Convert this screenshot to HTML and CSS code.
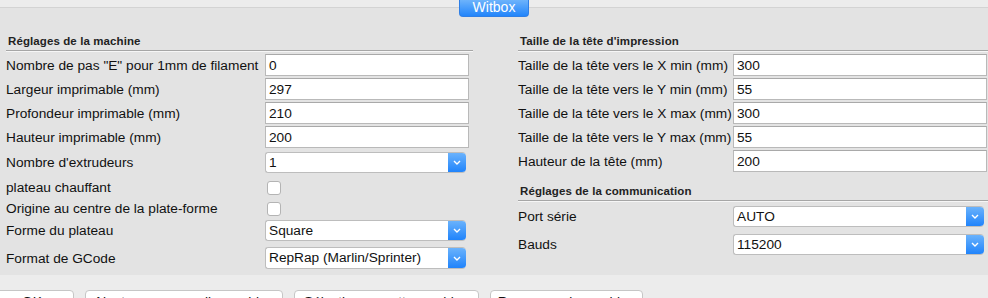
FILE: index.html
```html
<!DOCTYPE html>
<html lang="fr">
<head>
<meta charset="utf-8">
<title>Witbox</title>
<link rel="stylesheet" href="styles.css">
</head>
<body>
<div class="window">
  <div class="tabbar"><div class="tab">Witbox</div></div>
  <div class="panel">
    <div class="col left">
      <div class="section-title">Réglages de la machine</div>
      <div class="row r-first"><span class="label">Nombre de pas "E" pour 1mm de filament</span><div class="field">0</div></div>
      <div class="row"><span class="label">Largeur imprimable (mm)</span><div class="field">297</div></div>
      <div class="row"><span class="label">Profondeur imprimable (mm)</span><div class="field">210</div></div>
      <div class="row"><span class="label">Hauteur imprimable (mm)</span><div class="field">200</div></div>
      <div class="row r-sel1"><span class="label">Nombre d'extrudeurs</span><div class="select"><span class="val">1</span><span class="arrow"><svg width="8" height="5" viewBox="0 0 8 5"><path d="M1 1 L4 4 L7 1" fill="none" stroke="#fff" stroke-width="1.4"/></svg></span></div></div>
      <div class="row r-check1"><span class="label">plateau chauffant</span><span class="check"></span></div>
      <div class="row r-check2"><span class="label">Origine au centre de la plate-forme</span><span class="check"></span></div>
      <div class="row r-sel2"><span class="label">Forme du plateau</span><div class="select"><span class="val">Square</span><span class="arrow"><svg width="8" height="5" viewBox="0 0 8 5"><path d="M1 1 L4 4 L7 1" fill="none" stroke="#fff" stroke-width="1.4"/></svg></span></div></div>
      <div class="row r-sel3"><span class="label">Format de GCode</span><div class="select"><span class="val">RepRap (Marlin/Sprinter)</span><span class="arrow"><svg width="8" height="5" viewBox="0 0 8 5"><path d="M1 1 L4 4 L7 1" fill="none" stroke="#fff" stroke-width="1.4"/></svg></span></div></div>
    </div>
    <div class="col right">
      <div class="section-title">Taille de la tête d'impression</div>
      <div class="row r-first"><span class="label">Taille de la tête vers le X min (mm)</span><div class="field">300</div></div>
      <div class="row"><span class="label">Taille de la tête vers le Y min (mm)</span><div class="field">55</div></div>
      <div class="row"><span class="label">Taille de la tête vers le X max (mm)</span><div class="field">300</div></div>
      <div class="row"><span class="label">Taille de la tête vers le Y max (mm)</span><div class="field">55</div></div>
      <div class="row"><span class="label">Hauteur de la tête (mm)</span><div class="field">200</div></div>
      <div class="section-title st2">Réglages de la communication</div>
      <div class="row r-port"><span class="label">Port série</span><div class="select"><span class="val">AUTO</span><span class="arrow"><svg width="8" height="5" viewBox="0 0 8 5"><path d="M1 1 L4 4 L7 1" fill="none" stroke="#fff" stroke-width="1.4"/></svg></span></div></div>
      <div class="row r-baud"><span class="label">Bauds</span><div class="select"><span class="val">115200</span><span class="arrow"><svg width="8" height="5" viewBox="0 0 8 5"><path d="M1 1 L4 4 L7 1" fill="none" stroke="#fff" stroke-width="1.4"/></svg></span></div></div>
    </div>
  </div>
  <div class="buttons">
    <div class="btn btn-ok">OK</div>
    <div class="btn btn-add">Ajouter une nouvelle machine</div>
    <div class="btn btn-sel">Sélectionner cette machine</div>
    <div class="btn btn-ren">Renommer la machine</div>
  </div>
</div>
</body>
</html>
```

FILE: styles.css
```css
* { box-sizing: border-box; }
html, body { margin: 0; padding: 0; }
body {
  width: 988px;
  height: 298px;
  overflow: hidden;
  background: #ececec;
  font-family: "Liberation Sans", Arial, sans-serif;
  font-size: 13.7px;
  color: #111;
}
.window { position: relative; width: 988px; height: 298px; overflow: hidden; }
.tabbar {
  height: 8px;
  background: #ececec;
  border-bottom: 1px solid #d3d3d3;
}
.tab {
  position: absolute;
  top: 0;
  left: 459px;
  width: 70px;
  height: 17px;
  padding-bottom: 3px;
  line-height: 14px;
  text-align: center;
  color: #fff;
  font-size: 14px;
  background: linear-gradient(#6db3fb, #2285fb);
  border: 1px solid #2f7fe6;
  border-top: none;
  border-radius: 0 0 4px 4px;
  z-index: 2;
}
.panel {
  height: 267px;
  background: #e3e3e3;
  display: flex;
  padding-top: 22px;
}
.col { display: flex; flex-direction: column; }
.left { margin-left: 6px; width: 467px; }
.right { margin-left: 45px; width: 470px; }
.section-title {
  height: 21px;
  padding: 5px 0 2px 2px;
  line-height: 13px;
  font-size: 11.5px;
  font-weight: bold;
  color: #222;
  border-bottom: 1px solid #a6a6a6;
  box-shadow: 0 1px 0 #f6f6f6;
  letter-spacing: 0.1px;
}
.st2 { margin-top: 8px; }
.row {
  display: flex;
  align-items: center;
  height: 22px;
  margin-top: 2px;
}
.label { flex: none; white-space: nowrap; }
.left .label { width: 259px; }
.right .label { width: 215px; }
.field {
  height: 22px;
  background: #fff;
  border: 1px solid #b9b9b9;
  border-top-color: #a9a9a9;
  padding: 1px 3px 0;
  line-height: 20px;
}
.left .field { width: 204px; }
.right .field { flex: 1; margin-right: 1px; }
.r-first { margin-top: 3px; }
.r-sel1 { margin-top: 4px; height: 21px; }
.r-check1 { margin-top: 4px; height: 21px; }
.r-check2 { margin-top: 0; height: 21px; }
.r-sel2 { margin-top: 1px; height: 21px; }
.r-sel3 { margin-top: 6px; height: 22px; }
.r-port { margin-top: 5px; height: 21px; }
.r-baud { margin-top: 7px; height: 21px; }
.select {
  display: flex;
  height: 100%;
  background: #fff;
  border: 1px solid #bdbdbd;
  border-right: none;
  border-radius: 3px 4px 4px 3px;
  overflow: hidden;
}
.left .select { width: 201px; }
.right .select { flex: 1; margin-right: 4px; }
.select .val { flex: 1; padding-left: 3px; line-height: 19px; white-space: nowrap; }
.select .arrow {
  width: 18px;
  margin-top: -1px;
  margin-bottom: -1px;
  background: linear-gradient(#6eb5fc, #1c81fb);
  border-radius: 0 4px 4px 0;
  display: flex;
  align-items: center;
  justify-content: center;
}
.check {
  width: 14px;
  height: 14px;
  background: #fff;
  border: 1px solid #b4b4b4;
  border-radius: 3px;
  margin-left: 2px;
}
.buttons {
  display: flex;
  padding-top: 15px;
  margin-left: -10px;
}
.btn {
  flex: none;
  height: 22px;
  background: #fff;
  border: 1px solid #c6c6c6;
  border-radius: 4px;
  text-align: center;
  line-height: 20px;
  padding-top: 1px;
  white-space: nowrap;
  color: #111;
}
.btn-ok { width: 84px; }
.btn-add { width: 198px; margin-left: 11px; }
.btn-sel { width: 185px; margin-left: 11px; }
.btn-ren { width: 153px; margin-left: 11px; }
```
